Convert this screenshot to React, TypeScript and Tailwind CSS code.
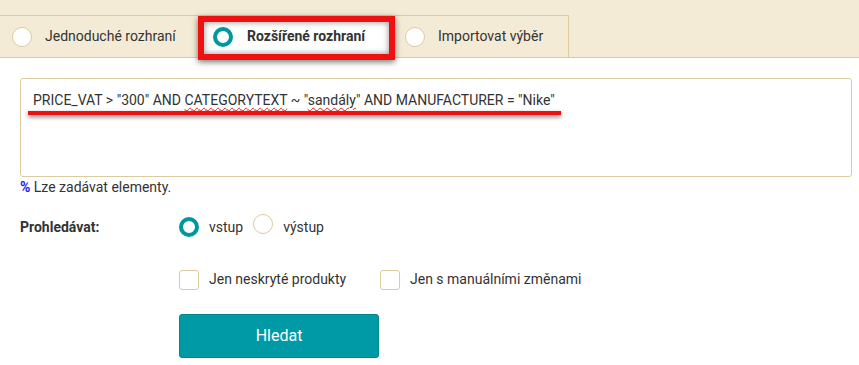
import React from "react";

const Radio = ({ active }: { active?: boolean }) =>
  active ? (
    <span className="inline-block w-[20px] h-[20px] rounded-full border-[4px] border-[#00979f] bg-white shrink-0" />
  ) : (
    <span className="inline-block w-[20px] h-[20px] rounded-full border border-[#dccb9f] bg-white shrink-0" />
  );

const Check = () => (
  <span className="inline-block w-[20px] h-[20px] rounded-[3px] border border-[#dccb9f] bg-white shrink-0" />
);

export default function App() {
  return (
    <div
      className="relative w-[859px] h-[365px] bg-white text-[#333333] overflow-hidden"
      style={{ fontFamily: "Roboto, 'Liberation Sans', sans-serif" }}
    >
      {/* tab bar */}
      <div className="bg-[#f3ebd5] pt-[15px] border-b border-[#dccb9f]">
        <div className="flex w-[569px] h-[42px] border-t border-r border-[#dccb9f] text-[14px]">
          <div className="flex items-center gap-[13px] pl-[12px] w-[200px]">
            <Radio />
            <span>Jednoduché rozhraní</span>
          </div>
          <div className="flex items-center gap-[14px] pl-[13px] w-[192px] bg-white">
            <Radio active />
            <span className="font-bold">Rozšířené rozhraní</span>
          </div>
          <div className="flex items-center gap-[13px] pl-[12px] flex-1 border-l border-[#dccb9f]">
            <Radio />
            <span>Importovat výběr</span>
          </div>
        </div>
      </div>

      {/* content */}
      <div className="px-[20px] pt-[20px]">
        <div className="w-[832px] h-[99px] border border-[#dccb9f] rounded-[3px] pl-[12px] pt-[11px] text-[14px] leading-[20px] text-[#333333]">
          PRICE_VAT &gt; "300" AND{" "}
          <span className="underline decoration-wavy decoration-[#e02020] decoration-1 underline-offset-2">CATEGORYTEXT</span>{" "}
          ~ "
          <span className="underline decoration-wavy decoration-[#e02020] decoration-1 underline-offset-2">sandály</span>
          " AND MANUFACTURER = "Nike"
        </div>
        <div className="text-[14px] leading-[18px] mt-[1px]">
          <span className="text-[#1a1aee] font-bold">%</span> Lze zadávat elementy.
        </div>

        <div className="flex items-center mt-[18px] text-[14px]">
          <div className="w-[159px] font-bold">Prohledávat:</div>
          <div className="flex items-center">
            <Radio active />
            <span className="ml-[10px]">vstup</span>
            <span className="ml-[10px]"><Radio /></span>
            <span className="ml-[10px]">výstup</span>
          </div>
        </div>

        <div className="flex items-center mt-[29px] ml-[159px] text-[14px]">
          <Check />
          <span className="ml-[10px] w-[171px]">Jen neskryté produkty</span>
          <Check />
          <span className="ml-[10px]">Jen s manuálními změnami</span>
        </div>

        <button className="mt-[24px] ml-[159px] w-[200px] h-[44px] rounded-[3px] bg-[#0099a6] border border-[#00868f] text-white text-[16px]">
          Hledat
        </button>
      </div>

      {/* annotations */}
      <div className="absolute left-[198px] top-[16px] w-[197px] h-[44px] border-[6px] border-[#ee1111] shadow-[0_2px_6px_rgba(0,0,0,0.55),inset_0_0_6px_rgba(0,0,0,0.45)]" />
      <div className="absolute left-[28px] top-[111px] w-[533px] h-[4px] bg-[#ee1111] shadow-[0_2px_4px_rgba(0,0,0,0.5)]" />
    </div>
  );
}
